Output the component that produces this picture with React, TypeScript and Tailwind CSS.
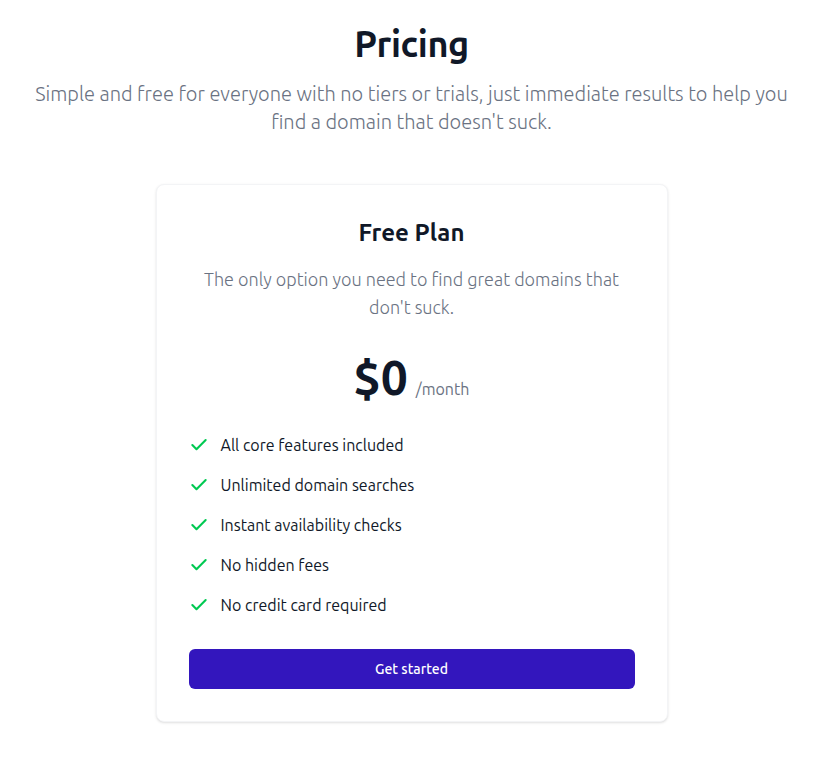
import { Check } from "lucide-react";

const features = [
  "All core features included",
  "Unlimited domain searches",
  "Instant availability checks",
  "No hidden fees",
  "No credit card required",
];

export default function App() {
  return (
    <div
      className="min-h-screen bg-white pt-6 pb-12 pl-6 pr-[35px]"
      style={{ fontFamily: "Ubuntu, 'Noto Sans', 'Open Sans', sans-serif" }}
    >
      <div className="mx-auto max-w-3xl text-center">
        <h1 className="text-4xl font-bold tracking-[-0.4px] text-gray-900">Pricing</h1>
        <p className="mt-4 text-xl leading-7 font-light text-gray-500">
          Simple and free for everyone with no tiers or trials, just immediate results to help you find a
          domain that doesn't suck.
        </p>
      </div>

      <div className="mx-auto mt-12 max-w-lg rounded-lg border border-gray-100 bg-white p-8 shadow">
        <h2 className="text-center text-2xl font-semibold text-gray-900">Free Plan</h2>
        <p className="mt-4 text-center text-lg leading-7 font-light text-gray-500">
          The only option you need to find great domains that don't suck.
        </p>

        <div className="mt-8 flex items-baseline justify-center">
          <span className="text-5xl leading-none font-bold text-gray-900">$0</span>
          <span className="ml-2 text-base text-gray-500">/month</span>
        </div>

        <ul className="mt-8 space-y-4">
          {features.map((f) => (
            <li key={f} className="flex items-center gap-3">
              <Check className="h-5 w-5 shrink-0 text-green-500" strokeWidth={2.5} />
              <span className="text-base text-gray-900">{f}</span>
            </li>
          ))}
        </ul>

        <button className="mt-8 flex h-10 w-full items-center justify-center rounded-md bg-[#3316bd] text-sm font-medium text-white">
          Get started
        </button>
      </div>
    </div>
  );
}
